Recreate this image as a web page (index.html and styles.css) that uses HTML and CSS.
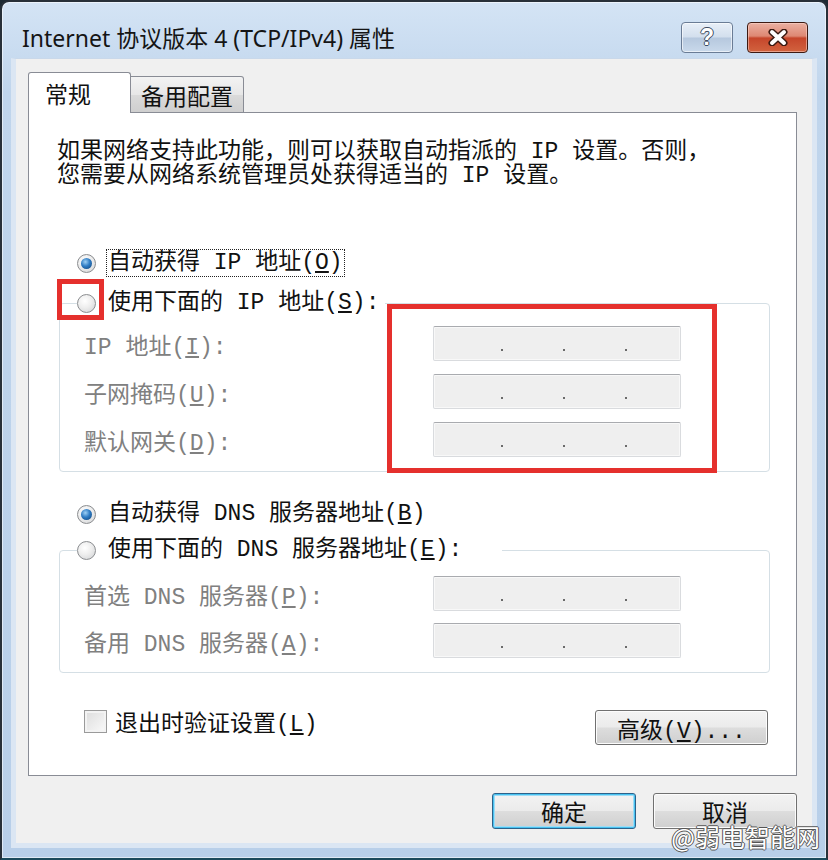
FILE: index.html
```html
<!DOCTYPE html>
<html lang="zh-CN">
<head>
    <meta charset="UTF-8">
    <meta name="viewport" content="width=device-width, initial-scale=1.0">
    <title>Internet 协议版本 4 (TCP/IPv4) 属性</title>
    <link rel="stylesheet" href="styles.css">
</head>
<body>
    <div class="window">
        <header class="titlebar">
            <div class="title">Internet 协议版本 4 (TCP/IPv4) 属性</div>
            <div class="caption-btns">
                <button class="cap-btn cap-help">?</button>
                <button class="cap-btn cap-close">
                    <svg width="22" height="17" viewBox="0 0 22 17">
                        <path d="M5 3 L17 14 M17 3 L5 14" stroke="#3b1a12" stroke-width="7" stroke-linecap="round"/>
                        <path d="M5 3 L17 14 M17 3 L5 14" stroke="#ffffff" stroke-width="4" stroke-linecap="round"/>
                    </svg>
                </button>
            </div>
        </header>

        <div class="client">
            <div class="tabs">
                <div class="tab tab-active">常规</div>
                <div class="tab">备用配置</div>
            </div>

            <div class="panel">
                <p class="intro">如果网络支持此功能，则可以获取自动指派的 IP 设置。否则，<br>您需要从网络系统管理员处获得适当的 IP 设置。</p>

                <div class="radio-row option option-first">
                    <span class="radio checked"></span>
                    <span class="label focus">自动获得 IP 地址(<u>O</u>)</span>
                </div>

                <fieldset class="group">
                    <legend>
                        <div class="radio-row">
                            <span class="radio"></span>
                            <span class="label">使用下面的 IP 地址(<u>S</u>):</span>
                        </div>
                    </legend>
                    <div class="field">
                        <span class="field-label">IP 地址(<u>I</u>):</span>
                        <span class="ip-box"><i></i><i></i><i></i></span>
                    </div>
                    <div class="field">
                        <span class="field-label">子网掩码(<u>U</u>):</span>
                        <span class="ip-box"><i></i><i></i><i></i></span>
                    </div>
                    <div class="field">
                        <span class="field-label">默认网关(<u>D</u>):</span>
                        <span class="ip-box"><i></i><i></i><i></i></span>
                    </div>
                </fieldset>

                <div class="radio-row option option-dns">
                    <span class="radio checked"></span>
                    <span class="label">自动获得 DNS 服务器地址(<u>B</u>)</span>
                </div>

                <fieldset class="group group-dns">
                    <legend>
                        <div class="radio-row">
                            <span class="radio"></span>
                            <span class="label">使用下面的 DNS 服务器地址(<u>E</u>):</span>
                        </div>
                    </legend>
                    <div class="field">
                        <span class="field-label">首选 DNS 服务器(<u>P</u>):</span>
                        <span class="ip-box"><i></i><i></i><i></i></span>
                    </div>
                    <div class="field">
                        <span class="field-label">备用 DNS 服务器(<u>A</u>):</span>
                        <span class="ip-box"><i></i><i></i><i></i></span>
                    </div>
                </fieldset>

                <div class="options-row">
                    <div class="check">
                        <span class="checkbox"></span>
                        <span>退出时验证设置(<u>L</u>)</span>
                    </div>
                    <button class="btn btn-adv">高级(<u>V</u>)...</button>
                </div>

                <!-- annotation marks -->
                <div class="mark mark-radio"></div>
                <div class="mark mark-inputs"></div>
            </div>

            <div class="dialog-btns">
                <button class="btn btn-default">确定</button>
                <button class="btn btn-cancel">取消</button>
            </div>
        </div>

        <div class="watermark">@弱电智能网</div>
    </div>
</body>
</html>
```

FILE: styles.css
```css
* {
    box-sizing: border-box;
    margin: 0;
    padding: 0;
}
body {
    width: 828px;
    height: 860px;
    overflow: hidden;
    background-color: #1d2a33;
    font-family: "Liberation Mono", "Noto Sans CJK SC", monospace;
    font-size: 23px;
    color: #111;
}
.window {
    position: relative;
    width: 828px;
    height: 860px;
    display: flex;
    flex-direction: column;
    padding: 0 9px 10px;
    border: 2px solid #283039;
    border-bottom-color: #1b4a5c;
    border-radius: 9px 9px 0 0;
    background: linear-gradient(#d4e4f5, #c0d5ec 90px, #b8cfe9);
    box-shadow: inset 0 0 0 1px rgba(255, 255, 255, 0.55);
}
.titlebar {
    height: 56px;
    display: flex;
    justify-content: space-between;
    align-items: flex-start;
    padding: 20px 9px 0 11px;
}
.title {
    font-family: "Noto Sans", "Noto Sans CJK SC", sans-serif;
    font-size: 23px;
    line-height: 32px;
    color: #151515;
}
.caption-btns {
    display: flex;
    gap: 14px;
}
.cap-btn {
    height: 31px;
    border-radius: 4px;
    display: flex;
    align-items: center;
    justify-content: center;
}
.cap-help {
    width: 52px;
    border: 1px solid #6a7c95;
    background: linear-gradient(#e8eff8 0%, #d3dfed 48%, #b6c8de 52%, #c9d9eb 100%);
    box-shadow: inset 0 0 0 1px rgba(255, 255, 255, 0.6);
    font-family: "Liberation Sans", sans-serif;
    font-weight: bold;
    font-size: 23px;
    color: #fff;
    text-shadow: 1px 0 #3d4c61, -1px 0 #3d4c61, 0 1px #3d4c61, 0 -1px #3d4c61;
}
.cap-close {
    width: 61px;
    border: 1px solid #3d1a12;
    background: linear-gradient(#eab0a2 0%, #de8873 45%, #c6462b 52%, #d2633f 100%);
    box-shadow: inset 0 0 0 1px rgba(255, 220, 210, 0.5);
}
.client {
    flex: 1;
    background-color: #f0f0f0;
    border: 5px solid #dbe6f3;
    border-top: 1px solid #c9d8ea;
    padding: 13px 15px 0 12px;
}
.tabs {
    display: flex;
    align-items: flex-end;
    height: 41px;
    margin-bottom: -1px;
    font-family: "Noto Sans CJK SC", sans-serif;
    font-size: 23px;
}
.tab {
    width: 113px;
    height: 37px;
    display: flex;
    align-items: center;
    justify-content: center;
    border: 1px solid #898c95;
    border-left: none;
    border-radius: 0 3px 0 0;
    background: linear-gradient(#f3f3f3 0%, #e7e7e7 50%, #dadada 52%, #cfcfcf 100%);
    color: #111;
}
.tab-active {
    position: relative;
    z-index: 1;
    width: 103px;
    height: 41px;
    justify-content: flex-start;
    padding: 0 0 0 16px;
    border-left: 1px solid #898c95;
    border-bottom: none;
    border-radius: 3px 3px 0 0;
    background: #fff;
}
.panel {
    position: relative;
    height: 664px;
    background-color: #fff;
    border: 1px solid #898c95;
    padding: 27px 26px 0 28px;
}
.intro {
    line-height: 24px;
    white-space: nowrap;
}
.radio-row {
    display: flex;
    align-items: center;
    gap: 10px;
    height: 28px;
}
.option {
    margin-left: 20px;
}
.option-first {
    margin-top: 61px;
}
.option-dns {
    margin-top: 28px;
}
.radio {
    position: relative;
    width: 19px;
    height: 19px;
    border-radius: 50%;
    border: 1px solid #8b8d90;
    background: radial-gradient(circle at 40% 35%, #ffffff 0%, #eeeeee 45%, #cfd1d3 100%);
}
.radio.checked::after {
    content: "";
    position: absolute;
    left: 3px;
    top: 3px;
    width: 11px;
    height: 11px;
    border-radius: 50%;
    background: radial-gradient(circle at 40% 35%, #9ed0f5 0%, #2f7cc4 45%, #0d3f75 100%);
}
.label {
    line-height: 26px;
    padding: 0 1px;
    border: 1px solid transparent;
}
.label.focus {
    border: 1px dotted #222;
}
.group {
    margin: 12px 0 0 2px;
    padding: 9px 0 14px 17px;
    border: 1px solid #d5dfe5;
    border-radius: 4px;
    min-width: 0;
}
.group legend {
    padding: 0 4px 0 0;
}
.group-dns {
    margin-top: 8px;
    padding-top: 12px;
}
.group-dns legend {
    padding-right: 38px;
}
.field {
    display: grid;
    grid-template-columns: 349px 248px;
    align-items: center;
    height: 35px;
    margin-left: 7px;
}
.field + .field {
    margin-top: 13px;
}
.group-dns .field + .field {
    margin-top: 12px;
}
.field-label {
    color: #808080;
    white-space: nowrap;
}
.ip-box {
    height: 35px;
    display: flex;
    align-items: flex-end;
    gap: 60px;
    padding: 0 0 9px 67px;
    border: 1px solid #d9dbde;
    border-top-color: #a9abaf;
    border-radius: 2px;
    background-color: #efefef;
    box-shadow: inset 0 0 0 1px #f8f8f8;
}
.ip-box i {
    width: 2px;
    height: 2px;
    background-color: #6a6a6a;
}
.options-row {
    display: flex;
    justify-content: space-between;
    align-items: flex-start;
    margin-top: 37px;
}
.check {
    display: flex;
    align-items: center;
    gap: 8px;
    height: 28px;
    margin: -3px 0 0 27px;
}
.checkbox {
    width: 23px;
    height: 23px;
    border: 1px solid #9a9a9a;
    background: linear-gradient(135deg, #dcdcdc, #fafafa);
    box-shadow: inset 0 0 0 2px #f3f3f3;
}
.btn {
    border: 1px solid #707070;
    border-radius: 3px;
    background: linear-gradient(#f3f3f3 0%, #ebebeb 49%, #dddddd 51%, #cfcfcf 100%);
    box-shadow: inset 0 0 0 1px #fcfcfc;
    font-family: "Noto Sans CJK SC", sans-serif;
    font-size: 23px;
    color: #111;
}
.btn-adv {
    width: 173px;
    height: 35px;
    margin-right: 2px;
    font-family: "Liberation Mono", "Noto Sans CJK SC", monospace;
}
.dialog-btns {
    display: flex;
    justify-content: flex-end;
    gap: 17px;
    margin-top: 17px;
}
.dialog-btns .btn {
    width: 144px;
    height: 36px;
}
.btn-default {
    border-color: #2c628b;
    box-shadow: inset 0 0 0 1px #47c2f0, inset 0 0 0 2px #9fdcf6;
}
.btn-cancel {
    width: 145px;
}
.mark {
    position: absolute;
    border: 5px solid #e5302d;
}
.mark-radio {
    left: 28px;
    top: 166px;
    width: 47px;
    height: 41px;
}
.mark-inputs {
    left: 358px;
    top: 191px;
    width: 330px;
    height: 169px;
}
.watermark {
    position: absolute;
    right: 6px;
    bottom: 7px;
    font-family: "Noto Sans CJK SC", sans-serif;
    font-size: 25px;
    line-height: 30px;
    color: #fff;
    text-shadow: 1px 0 #555, -1px 0 #555, 0 1px #555, 0 -1px #555;
}
```
